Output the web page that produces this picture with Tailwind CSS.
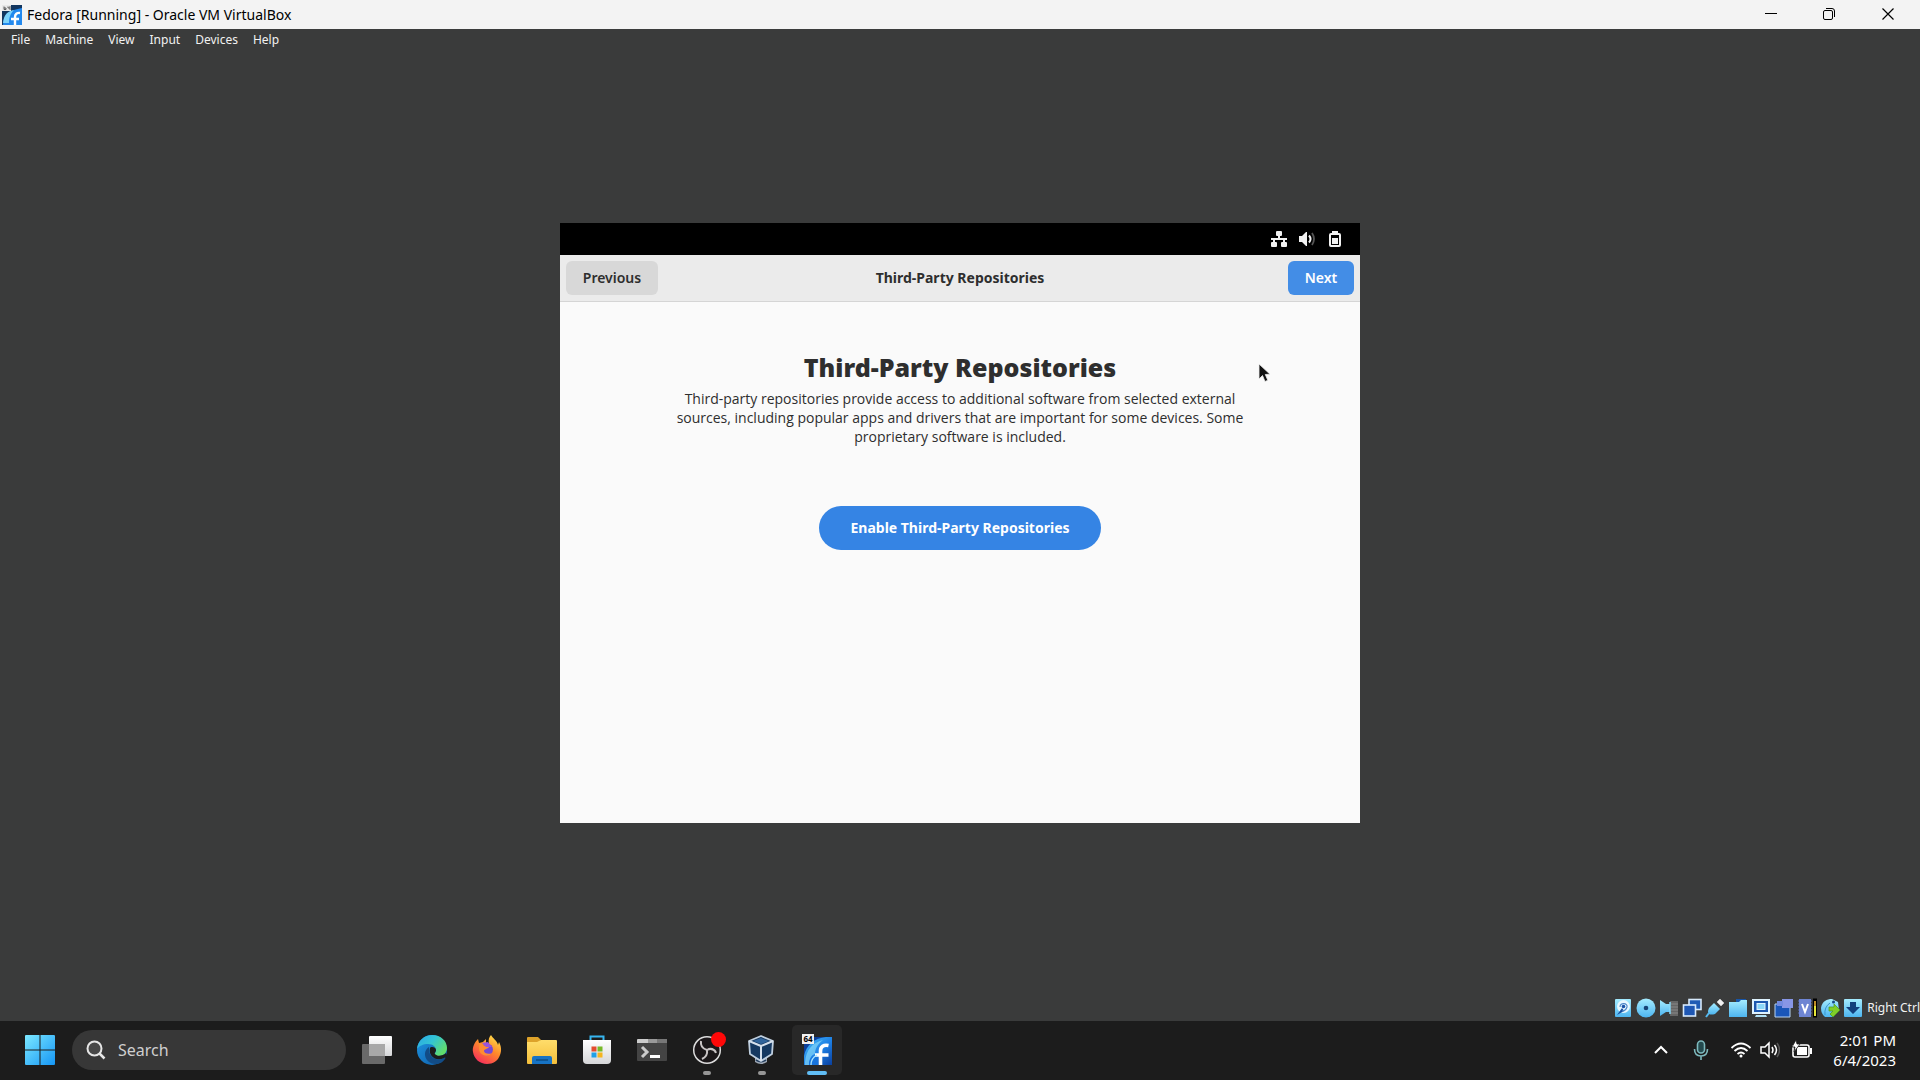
<!DOCTYPE html>
<html lang="en">
<head>
<meta charset="utf-8">
<title>Fedora [Running] - Oracle VM VirtualBox</title>
<script src="https://cdn.jsdelivr.net/npm/@tailwindcss/browser@4"></script>
</head>
<body class="flex h-screen flex-col overflow-hidden bg-[#3a3b3b] font-['Noto_Sans',sans-serif]">
<svg class="absolute size-0" aria-hidden="true">
  <defs>
    <linearGradient id="sky" x1="0" y1="0" x2="0" y2="1"><stop offset="0" stop-color="#a5ecff"/><stop offset="1" stop-color="#4db5f0"/></linearGradient>
    <linearGradient id="fed" x1="0" y1="0" x2="1" y2="1"><stop offset="0" stop-color="#4cc0f8"/><stop offset=".55" stop-color="#1d7fe4"/><stop offset="1" stop-color="#0a3f9e"/></linearGradient>
    <linearGradient id="win" x1="0" y1="0" x2="1" y2="1"><stop offset="0" stop-color="#7ce8ff"/><stop offset="1" stop-color="#1596f5"/></linearGradient>
    <linearGradient id="edgeTop" x1="0" y1="0" x2="1" y2=".6"><stop offset="0" stop-color="#2ba6e6"/><stop offset=".5" stop-color="#33c4d4"/><stop offset="1" stop-color="#62dd6b"/></linearGradient>
    <linearGradient id="edgeSide" x1="0" y1="0" x2="1" y2="1"><stop offset="0" stop-color="#1f97e4"/><stop offset="1" stop-color="#0c59a4"/></linearGradient>
    <linearGradient id="fox" x1=".8" y1="0" x2=".2" y2="1"><stop offset="0" stop-color="#ffe04a"/><stop offset=".45" stop-color="#ff8a2a"/><stop offset="1" stop-color="#f5275f"/></linearGradient>
    <linearGradient id="fold" x1="0" y1="0" x2="0" y2="1"><stop offset="0" stop-color="#ffdd6b"/><stop offset="1" stop-color="#f4bf3b"/></linearGradient>
    <linearGradient id="bag" x1="0" y1="0" x2="0" y2="1"><stop offset="0" stop-color="#ffffff"/><stop offset="1" stop-color="#d5d6d8"/></linearGradient>
    <symbol id="fedora" viewBox="0 0 30 30">
      <rect x="2" y="2" width="28" height="28" fill="#0c3f99"/>
      <path d="M2 30V21C4 10 13 3 24 2h6v28Z" fill="url(#fed)"/>
      <path d="M3 27C4 15 10 8 21 5c-6 5-8 9-8 14-4 1-6 5-6 11H3Z" fill="#8bdcfb" opacity=".65"/>
      <path d="M7 30c0-6 3-10 9-10v10Z" fill="#1874dc"/>
      <path d="M18.500 30V16c0-4.500 3-6.500 8-5.500M13 20h13.500" fill="none" stroke="#fff" stroke-width="3.600"/>
      <path d="M9 30c0-5 2-8 6-10" fill="none" stroke="#a9e6ff" stroke-width="1.300"/>
    </symbol>
  </defs>
</svg>

<header class="flex h-[29px] shrink-0 items-center bg-[#f3f3f3] pl-[2px] text-black">
  <svg class="size-5 shrink-0" viewBox="0 0 20 20"><rect width="20" height="20" fill="#12365f"/><path d="M1 20C1 10 8 5 20 3v17Z" fill="#2389ee"/><path d="M1 18C2 9 6 6 12 5c-4 4-5 8-5 13Z" fill="#7bd3fb"/><path d="M13 20v-8c0-3 2-4.500 5-4M9 14h8" fill="none" stroke="#fff" stroke-width="2.400"/><rect width="9" height="6" fill="#e8e8e8"/><path d="M2 1.500v3h2v-1.500H2M6 1.500V3h2M8 1v4" fill="none" stroke="#444" stroke-width=".8"/></svg>
  <h1 class="ml-[5px] flex-1 text-[14px] leading-5">Fedora [Running] - Oracle VM VirtualBox</h1>
  <div class="flex h-full pb-px">
    <button class="flex w-[58px] items-center justify-center" aria-label="Minimize"><svg class="size-3" viewBox="0 0 12 12"><path d="M0 5.500h12" stroke="#000"/></svg></button>
    <button class="flex w-[58px] items-center justify-center" aria-label="Restore"><svg class="size-3" viewBox="0 0 12 12" fill="none" stroke="#000"><rect x=".5" y="2.500" width="9" height="9" rx="1.500"/><path d="M3 .5h6q2.500 0 2.500 2.500v6"/></svg></button>
    <button class="flex w-[60px] items-center justify-center" aria-label="Close"><svg class="size-3" viewBox="0 0 12 12"><path d="M.5.5l11 11M11.500.5l-11 11" stroke="#000" stroke-width="1.200"/></svg></button>
    <span class="w-[2px]"></span>
  </div>
</header>

<nav class="flex h-[23px] shrink-0 items-start gap-[15px] pl-[11px] pt-[2px] text-[12px] leading-[18px] text-[#f2f2f2]">
  <button>File</button><button>Machine</button><button>View</button><button>Input</button><button>Devices</button><button>Help</button>
</nav>

<main class="flex flex-1 items-center justify-center">
  <section class="relative flex h-[600px] w-[800px] flex-col bg-[#fafafa] text-[#2e2e2e]">
    <div class="flex h-8 items-center justify-end gap-3 bg-black pr-[17px]">
      <svg class="size-4" viewBox="0 0 16 16" fill="#f2f2f2"><rect x="5" y="0" width="6" height="5" rx="1"/><rect x="0" y="11" width="6" height="5" rx="1"/><rect x="10" y="11" width="6" height="5" rx="1"/><path d="M7 4h2v3h7v2h-2v3h-2V9H4v3H2V9H0V7h7Z"/></svg>
      <svg class="size-4" viewBox="0 0 16 16"><path d="M0 5h3l4-4h1v14H7l-4-4H0Z" fill="#f2f2f2"/><path d="M10 4.500q3 3.500 0 7" fill="none" stroke="#f2f2f2" stroke-width="2"/><path d="M13 2q4 6 0 12" fill="none" stroke="#555" stroke-width="1.800"/></svg>
      <svg class="size-4" viewBox="0 0 16 16"><path d="M5 0h6v2h1q2 0 2 2v10q0 2-2 2H4q-2 0-2-2V4q0-2 2-2h1Z" fill="#f2f2f2"/><path d="M4 4h8v10H4Z" fill="#000"/><path d="M5 7h6v6H5Z" fill="#f2f2f2"/></svg>
    </div>
    <div class="grid h-[47px] grid-cols-[1fr_auto_1fr] items-center border-b border-[#d5d5d5] bg-[#ebebeb] px-[6px] text-[14px] font-bold">
      <button class="h-[34px] w-[92px] justify-self-start rounded-[6px] bg-[#d8d8d8] pb-[2px] font-semibold">Previous</button>
      <h2 class="pb-[2px]">Third-Party Repositories</h2>
      <button class="h-[34px] w-[66px] justify-self-end rounded-[6px] bg-[#438de6] pb-[2px] font-semibold text-white">Next</button>
    </div>
    <div class="flex flex-col items-center pt-[47px] text-center">
      <h3 class="text-[25px] font-black leading-9">Third-Party Repositories</h3>
      <p class="pt-1 font-['Open_Sans',sans-serif] text-[14px] leading-[19px]">Third-party repositories provide access to additional software from selected external<br>sources, including popular apps and drivers that are important for some devices. Some<br>proprietary software is included.</p>
      <button class="mt-[60px] h-11 w-[282px] rounded-full bg-[#3584e4] pb-[2px] text-[14px] font-bold text-white">Enable Third-Party Repositories</button>
    </div>
    <svg class="absolute left-[698px] top-[140px] h-[20px] w-[14px]" viewBox="0 0 14 20"><path d="M1 1v15l3.500-3.500 2.500 6 2.800-1.200-2.500-5.800 4.700-.3Z" fill="#111" stroke="#eee" stroke-width=".8"/></svg>
  </section>
</main>

<div class="flex h-[27px] shrink-0 items-center justify-end gap-[3px] whitespace-nowrap text-[12px] text-[#f2f2f2]">
  <svg class="size-5" viewBox="0 0 20 20"><rect x="2" y="1" width="16" height="18" rx="1" fill="url(#sky)"/><circle cx="10.500" cy="8.500" r="6.500" fill="#e8f8ff"/><path d="M4 17l7-4-2-3Z" fill="#174da0"/><path d="M7 9c0-5 8-4 7 0-1 3-3 4-5 4" fill="none" stroke="#4f87c8" stroke-width="1.200"/><circle cx="10.500" cy="8.500" r="1.800" fill="#1b52a7"/></svg>
  <svg class="size-5" viewBox="0 0 20 20"><circle cx="10" cy="10" r="9.500" fill="url(#sky)"/><circle cx="10" cy="10" r="2.300" fill="#174375"/></svg>
  <svg class="size-5" viewBox="0 0 20 20"><path d="M11 3h8v15h-8Z" fill="#666"/><path d="M12 6h7M12 9h7M12 12h7M12 15h7" stroke="#888"/><path d="M1 2l6 4h4v8H7l-6 4Z" fill="url(#sky)"/><path d="M11 4v12" stroke="#89dafa" stroke-width="1.500"/></svg>
  <svg class="size-5" viewBox="0 0 20 20"><rect x="7" y="1.500" width="12" height="10" fill="#1f5bb5" stroke="#d6e9fc" stroke-width="1.600"/><rect x="1.500" y="7" width="12" height="11" fill="#1e57b4" stroke="#d6e9fc" stroke-width="1.600"/></svg>
  <svg class="size-5" viewBox="0 0 20 20"><path d="M12 4l3-3 4 4-3 3Z" fill="#f0f0f0" stroke="#bbb"/><path d="M9 5l6 6-5 5q-4 1-6 0-2-2 0-6Z" fill="url(#sky)"/><path d="M4 15l-3 4" stroke="#55b9ee" stroke-width="2"/></svg>
  <svg class="size-5" viewBox="0 0 20 20"><path d="M8 1h10v8H8Z" fill="#1756a9"/><path d="M1 4h10l2-2h6v17H1Z" fill="url(#sky)"/></svg>
  <svg class="size-5" viewBox="0 0 20 20"><rect x="1" y="1" width="18" height="15" fill="#dff3ff"/><rect x="3" y="3" width="14" height="11" fill="#1d58b0"/><rect x="6" y="5.500" width="8" height="6" fill="#8bd7fa" stroke="#dff3ff"/><path d="M5 17h10l1 2H4Z" fill="#b3e3f8"/></svg>
  <svg class="size-5" viewBox="0 0 20 20"><path d="M1 6h15v13H1Z" fill="#1a56b8" stroke="#b6d3f4"/><path d="M8 1h11v9H8Z" fill="#8796e6"/><path d="M3 3h6v5H3Z" fill="#738be0"/></svg>
  <svg class="size-5" viewBox="0 0 20 20"><path d="M1 3h14M1 6h14M1 9h14M1 12h14M1 15h14" stroke="#5368ba"/><rect x="2" y="1" width="12" height="18" fill="#6e85d3"/><path d="M5 6l3 8 3-8" fill="none" stroke="#fff" stroke-width="2"/><rect x="16" y=".5" width="4" height="19" fill="#000"/><path d="M18 3v5" stroke="#be8b28" stroke-width="2"/><path d="M18 8v10" stroke="#e5e63a" stroke-width="2"/></svg>
  <svg class="size-5" viewBox="0 0 20 20"><path d="M1 10C2 3 7 1 12 1l6 3 1 8-6 7H5Q1 16 1 10Z" fill="url(#sky)"/><path d="M5 17q-1-8 5-12" stroke="#3995cb" fill="none"/><circle cx="13.500" cy="4" r="1.500" fill="#154985"/><path d="M9 9h5V6l6 6-7 7-3-3 3-3H9Z" fill="#80cf28" stroke="#4b991b" stroke-width=".7"/></svg>
  <svg class="size-5" viewBox="0 0 20 20"><rect x="1" y="1" width="18" height="18" rx="1" fill="url(#sky)"/><path d="M7 4h6v5h4l-7 7-7-7h4Z" fill="#123f7d"/></svg>
  <span class="pl-px">Right Ctrl</span>
</div>

<footer class="flex h-[59px] shrink-0 items-center bg-[#1c1c1c] pb-px pl-[15px] text-white">
  <button class="flex size-[50px] items-center justify-center" aria-label="Start"><svg class="size-[30px]" viewBox="0 0 29 29" fill="url(#win)"><path d="M1 0h13v14H0V1q0-1 1-1ZM15 0h13q1 0 1 1v13H15ZM0 15h14v14H1q-1 0-1-1ZM15 15h14v13q0 1-1 1H15Z"/></svg></button>
  <label class="ml-[7px] flex h-10 w-[274px] items-center rounded-full bg-[#373737] pl-[14px]">
    <svg class="size-5 shrink-0" viewBox="0 0 20 20" fill="none" stroke="#e6e6e6" stroke-width="2"><circle cx="8.500" cy="8.500" r="7" fill="#484848"/><path d="M13.500 13.500l5 5" stroke-width="2.500"/></svg>
    <input class="ml-3 w-full min-w-0 bg-transparent text-[16px] placeholder:text-[#cfcfcf] outline-none" type="text" placeholder="Search" aria-label="Search">
  </label>
  <div class="ml-[6px] flex gap-[5px]">
    <button class="flex size-[50px] items-center justify-center" aria-label="Task view"><svg class="size-[30px]" viewBox="0 0 30 30"><rect x="7" y="1" width="23" height="20" rx="1" fill="url(#bag)"/><rect x="0" y="9" width="23" height="20" rx="1" fill="#777" opacity=".85"/><rect x="7" y="9" width="16" height="12" fill="#a8a8a8"/></svg></button>
    <button class="flex size-[50px] items-center justify-center" aria-label="Microsoft Edge"><svg class="size-[30px]" viewBox="0 0 30 30"><circle cx="15" cy="15" r="15" fill="url(#edgeSide)"/><path d="M0 14C1 5 8 0 15 0c9 0 15 6 15 13 0 5-4 8-8 8-3 0-5-1-4-3 1-1 1-2 1-3 0-3-3-6-8-6-5 0-9 2-11 5Z" fill="url(#edgeTop)"/><path d="M12 12c-8 5-3 17 6 17 5 0 8-2 10-5 1-1 0-2-1-1-7 4-16 0-15-11Z" fill="#124c86"/><path d="M13 13c1-2 6-1 6 2 0 2-2 3-1 4 2 3 8 2 11-1l1 3-3 2c-8 4-16-2-14-10Z" fill="#1c1c1c"/></svg></button>
    <button class="flex size-[50px] items-center justify-center" aria-label="Firefox"><svg class="size-[30px]" viewBox="0 0 30 30"><path d="M1 17C0 12 3 7 6 4l1 4 4-1 3-3v4l3 1C16 5 17 2 19 0c2 4 6 5 7 10l1-3c2 4 3 8 1 13-2 6-7 9-13 9C8 29 2 24 1 17Z" fill="url(#fox)"/><circle cx="15" cy="14.500" r="6" fill="#7549d4"/><path d="M7 8l4 2 6 2c-1 2-5 2-5 4s4 4 8 2c-2 4-12 4-13-4Z" fill="#ff8c32"/><path d="M10 8l6-1 4 5-6 0Z" fill="#9a54d9"/></svg></button>
    <button class="flex size-[50px] items-center justify-center" aria-label="File Explorer"><svg class="size-[30px]" viewBox="0 0 30 30"><path d="M0 3q0-1 1-1h10l3 3-2 5H0Z" fill="#dda22a"/><path d="M0 7h10l4-2h15q1 0 1 1v22q0 1-1 1H1q-1 0-1-1Z" fill="url(#fold)"/><path d="M5 29v-6q0-2 2-2h16q2 0 2 2v6Z" fill="#1773c4"/><path d="M9 25h12" stroke="#0c4c86" stroke-width="1.500"/></svg></button>
    <button class="flex size-[50px] items-center justify-center" aria-label="Microsoft Store"><svg class="size-[30px]" viewBox="0 0 30 30"><path d="M8.500 7V1.500h13V7" fill="none" stroke="#36b5ef" stroke-width="2"/><path d="M1 5h28v20q0 4-4 4H5q-4 0-4-4Z" fill="url(#bag)"/><path d="M9.500 11.500h5v5h-5Z" fill="#e34c2f"/><path d="M15.500 11.500h5v5h-5Z" fill="#77b928"/><path d="M9.500 17.500h5v5h-5Z" fill="#21a0e6"/><path d="M15.500 17.500h5v5h-5Z" fill="#f5b51f"/></svg></button>
    <button class="flex size-[50px] items-center justify-center" aria-label="Terminal"><svg class="size-[30px]" viewBox="0 0 30 30"><rect y="4" width="30" height="22" rx="1" fill="#444"/><path d="M0 4h30v4H0Z" fill="#777"/><path d="M1 4h10v4H0V5Z" fill="#ccc"/><path d="M11 4h9v4h-9Z" fill="#999"/><path d="M5 12l5 5-5 5" fill="none" stroke="#ccc" stroke-width="3"/><path d="M13 21.500h10" stroke="#fff" stroke-width="3"/></svg></button>
    <button class="relative flex size-[50px] items-center justify-center" aria-label="OBS Studio"><svg class="size-[30px]" viewBox="0 0 30 30"><circle cx="15" cy="15" r="13.300" fill="#1b1719" stroke="#ddd" stroke-width="1.500"/><path d="M9 6q-1 7 6 9 5-3 9 2M15 15q1 6-5 9M20 14q3 1 4 4" fill="none" stroke="#c9c4c5" stroke-width="2"/></svg><i class="absolute left-[29px] top-[7px] size-[15px] rounded-full bg-[#ff0808]"></i><i class="absolute bottom-0 left-[21px] h-1 w-2 rounded-full bg-[#969696]"></i></button>
    <button class="relative flex size-[50px] items-center justify-center" aria-label="VirtualBox"><svg class="size-[30px]" viewBox="0 0 30 30"><path d="M8 22h12v5q-6 4-12 0Z" fill="#9fa9b6"/><path d="M9 25q5 3 10 0" stroke="#27405f" fill="none" stroke-width="2"/><path d="M14 1l12 5-1 13-11 7L3 19 2 6Z" fill="#163961" stroke="#bfcfdf" stroke-width="1.800" stroke-linejoin="round"/><path d="M2 6l12 5v15M14 11l12-5" fill="none" stroke="#d5e0ec" stroke-width="2"/><path d="M6 6l8-3 8 3-8 3Z" fill="#31649b"/></svg><i class="absolute bottom-0 left-[21px] h-1 w-2 rounded-full bg-[#969696]"></i></button>
    <button class="relative flex size-[50px] items-center justify-center rounded-[5px] bg-[#282828]" aria-label="Fedora virtual machine"><svg class="size-[30px]"><use href="#fedora"/></svg><span class="absolute left-[10px] top-[9px] flex h-[10px] w-3 items-center justify-center bg-[#f0f0f0] text-[8px] font-bold leading-none text-black">64</span><i class="absolute bottom-0 left-[15px] h-1 w-5 rounded-full bg-[#60bdf5]"></i></button>
  </div>
  <div class="ml-auto flex items-center pr-6">
    <button class="flex w-10 justify-center" aria-label="Show hidden icons"><svg class="h-4 w-4" viewBox="0 0 16 16"><path d="M2 11l6-6 6 6" fill="none" stroke="#fff" stroke-width="2"/></svg></button>
    <button class="flex w-10 justify-center" aria-label="Microphone"><svg class="h-5 w-4" viewBox="0 0 16 20" fill="none" stroke="#7db9bd" stroke-width="1.600"><rect x="4.500" y="1" width="7" height="12" rx="3.500" fill="#244a4e"/><path d="M1.500 9q0 7 6.500 7t6.500-7M8 16v4"/></svg></button>
    <button class="ml-[9px] flex items-center gap-2" aria-label="Network, volume and battery">
      <svg class="h-5 w-[22px]" viewBox="0 0 22 20" fill="none" stroke="#fff" stroke-width="1.800"><path d="M1.500 8q9.500-9 19 0M4.500 11q6.500-6 13 0M7.500 14q3.500-3 7 0"/><circle cx="11" cy="16" r="1.500" fill="#fff" stroke="none"/></svg>
      <svg class="h-5 w-5" viewBox="0 0 20 20" fill="none" stroke="#fff" stroke-width="1.500"><path d="M1 7h4l4-4v14l-4-4H1Z"/><path d="M12 7q2 3 0 6M14.500 5q4 5 0 10"/><path d="M17 3q5 7 0 14" stroke="#555"/></svg>
      <svg class="ml-1 h-5 w-5" viewBox="0 0 20 20"><rect x="1" y="5" width="16" height="12" rx="2" fill="none" stroke="#fff" stroke-width="1.600"/><rect x="5" y="7" width="10" height="8" fill="#fff"/><path d="M18 8h2v6h-2Z" fill="#fff"/><path d="M4 0L0 7h3l-1 5 6-8H5Z" fill="#fff" stroke="#1c1c1c" stroke-width=".8"/></svg>
    </button>
    <time class="ml-[21px] text-right text-[15px] leading-5" datetime="2023-06-04T14:01">2:01 PM<br>6/4/2023</time>
  </div>
</footer>
</body>
</html>
